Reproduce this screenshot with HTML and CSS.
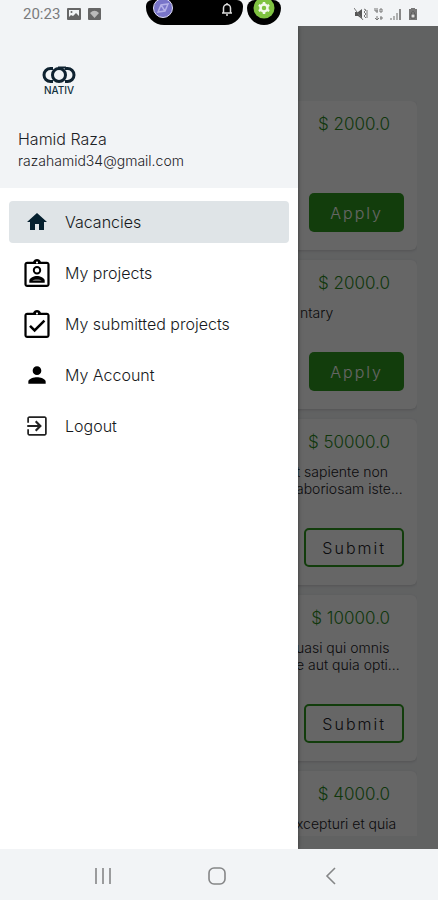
FILE: index.html
```html
<!DOCTYPE html>
<html lang="en">
<head>
<meta charset="utf-8">
<meta name="viewport" content="width=device-width, initial-scale=1">
<title>Nativ</title>
<link rel="stylesheet" href="styles.css">
</head>
<body>
<header class="status">
  <div class="status-left">
    <span class="clock">20:23</span>
    <svg width="14" height="14" viewBox="0 0 14 14"><rect y="1" width="14" height="12" rx="1" fill="#666"/><path d="M2 3h10v6L9 6 6 9 4 8 2 10z" fill="#f2f4f6"/><circle cx="4.500" cy="5" r="1" fill="#666"/></svg>
    <svg width="14" height="14" viewBox="0 0 14 14"><rect y="1" width="13" height="12" rx="1" fill="#666"/><path d="M2 6q4.500-4.500 9 0l-4.500 5z" fill="#bbb"/></svg>
  </div>
  <div class="cutouts">
    <div class="pill">
      <svg width="22" height="22" viewBox="0 0 22 22"><circle cx="11" cy="8" r="9.500" fill="#7975c9" stroke="#dedcf3"/><path d="M6 12l3-7 7-1-3 7zM9 5l4 6" fill="none" stroke="#b5b1e8" stroke-width="1.500"/></svg>
      <svg width="12" height="14" viewBox="0 0 12 14"><path d="M1 11h10M2.500 11V6a3.500 3.500 0 0 1 7 0v5M5 13h2M6 1v1" fill="none" stroke="#ddd" stroke-width="1.500"/></svg>
    </div>
    <div class="lens">
      <svg width="22" height="22" viewBox="0 0 22 22"><circle cx="11" cy="8" r="10.500" fill="#7fc241"/><circle cx="11" cy="8" r="3.500" fill="none" stroke="#f3f8ec" stroke-width="2.500"/><path d="M11 2v3M11 11v3M5.800 5l2.600 1.500M13.600 9.500l2.600 1.500M5.800 11l2.600-1.500M13.600 6.500L16.200 5" stroke="#f3f8ec" stroke-width="2.500"/></svg>
    </div>
  </div>
  <div class="status-right">
    <svg width="14" height="14" viewBox="0 0 14 14"><path d="M1 5h3l4-3v10L4 9H1z" fill="#555"/><path d="M0 1l9 12M10 2l2 1-2 2 2 2-2 2 2 2M13 3v8" fill="none" stroke="#777"/></svg>
    <svg width="10" height="14" viewBox="0 0 10 14"><path d="M1 1v3h3M3 1v5M6 2h2v3H6zM3 9v4M1 11l2 2 2-2M7 13V9M6 11h3" fill="none" stroke="#777"/></svg>
    <svg width="12" height="14" viewBox="0 0 12 14"><path d="M1 13v-2M4 13V9M7 13V6" stroke="#999" stroke-width="1.500"/><path d="M10 13V2" stroke="#888" stroke-width="2"/></svg>
    <svg width="10" height="14" viewBox="0 0 10 14"><path d="M3 1h4v1h2v11H1V2h2z" fill="#777"/><path d="M3 7h4v4H3zM4 7V5h2v2" fill="#ddd" stroke="#555"/></svg>
  </div>
</header>

<main class="screen">
  <section class="vacancies">
    <article class="card">
      <p class="price">$ 2000.0</p>
      <p class="summary">&nbsp;</p>
      <button class="btn solid" type="button">Apply</button>
    </article>
    <article class="card">
      <p class="price">$ 2000.0</p>
      <p class="summary">&nbsp;ntary</p>
      <button class="btn solid" type="button">Apply</button>
    </article>
    <article class="card">
      <p class="price">$ 50000.0</p>
      <p class="summary">t sapiente non<br>aboriosam iste...</p>
      <button class="btn outline" type="button">Submit</button>
    </article>
    <article class="card">
      <p class="price">$ 10000.0</p>
      <p class="summary">uasi qui omnis<br>e aut quia opti...</p>
      <button class="btn outline" type="button">Submit</button>
    </article>
    <article class="card">
      <p class="price">$ 4000.0</p>
      <p class="summary">xcepturi et quia</p>
    </article>
  </section>

  <div class="scrim"></div>

  <aside class="drawer">
    <div class="profile">
      <div class="logo">
        <svg width="36" height="18" viewBox="0 0 36 18" fill="none" stroke="#0f2230" stroke-width="3"><circle cx="18" cy="9" r="6.500"/><path d="M12 2.500H9.500a6.500 6.500 0 0 0 0 13H12M24 2.500h2.500a6.500 6.500 0 0 1 0 13H24"/><path d="M17 1.500h8" stroke-width="2"/></svg>
        <span class="brand">NATIV</span>
      </div>
      <p class="name">Hamid Raza</p>
      <p class="email">razahamid34@gmail.com</p>
    </div>
    <nav class="menu">
      <a class="item active" href="#vacancies"><span class="icon"><svg width="24" height="24" viewBox="0 0 24 24" fill="#05202f"><path d="M10 20v-6h4v6h5v-8h3L12 3 2 12h3v8z"/></svg></span>Vacancies</a>
      <a class="item" href="#projects"><span class="icon"><svg width="26" height="28" viewBox="3 1 18 20"><path d="M19 3h-4.180C14.400 1.840 13.300 1 12 1s-2.400.84-2.820 2H5c-1.100 0-2 .9-2 2v14c0 1.100.9 2 2 2h14c1.100 0 2-.9 2-2V5c0-1.100-.9-2-2-2zm-7-.25c.41 0 .75.34.75.75s-.34.75-.75.75-.75-.34-.75-.75.34-.75.75-.75zM19.400 19.400H4.600V4.600h14.800z"/><circle cx="12" cy="9" r="2.300" fill="none" stroke="#000" stroke-width="1.400"/><path d="M6.500 18v-1.500c0-2 3.500-3.300 5.500-3.300s5.500 1.300 5.500 3.300V18z"/><path d="M8.700 16.500c1-1.200 5.600-1.200 6.600 0z" fill="#888"/></svg></span>My projects</a>
      <a class="item" href="#submitted"><span class="icon"><svg width="26" height="28" viewBox="3 1 18 20"><path d="M19 3h-4.180C14.400 1.840 13.300 1 12 1s-2.400.84-2.820 2H5c-1.100 0-2 .9-2 2v14c0 1.100.9 2 2 2h14c1.100 0 2-.9 2-2V5c0-1.100-.9-2-2-2zm-7-.25c.41 0 .75.34.75.75s-.34.75-.75.75-.75-.34-.75-.75.34-.75.75-.75zM19.400 19.400H4.600V4.600h14.800z"/><path d="M7 12.300l3.300 3.300L17.300 8.600" fill="none" stroke="#000" stroke-width="1.800"/></svg></span>My submitted projects</a>
      <a class="item" href="#account"><span class="icon"><svg width="26" height="26" viewBox="0 0 24 24"><path d="M12 12c2.210 0 4-1.790 4-4s-1.790-4-4-4-4 1.790-4 4 1.790 4 4 4zm0 2c-2.670 0-8 1.340-8 4v2h16v-2c0-2.660-5.330-4-8-4z"/></svg></span>My Account</a>
      <a class="item" href="#logout"><span class="icon"><svg width="26" height="26" viewBox="0 0 24 24" fill="#222"><path d="M10.090 15.590L11.500 17l5-5-5-5-1.410 1.410L12.670 11H3v2h9.670l-2.580 2.590zM19 3H5c-1.110 0-2 .9-2 2v4h1.600V4.600h14.800v14.800H4.600V15H3v4c0 1.100.89 2 2 2h14c1.100 0 2-.9 2-2V5c0-1.100-.9-2-2-2z"/></svg></span>Logout</a>
    </nav>
  </aside>
</main>

<footer class="keys">
  <button class="key" type="button" aria-label="Recents"><svg width="18" height="18" viewBox="0 0 18 18"><path d="M2 1v16M9 1v16M16 1v16" stroke="#858687" stroke-width="1.600"/></svg></button>
  <button class="key" type="button" aria-label="Home"><svg width="18" height="18" viewBox="0 0 18 18"><rect x="1" y="1" width="16" height="16" rx="5" fill="none" stroke="#858687" stroke-width="1.600"/></svg></button>
  <button class="key" type="button" aria-label="Back"><svg width="18" height="18" viewBox="0 0 18 18"><path d="M13 1L5 9l8 8" fill="none" stroke="#858687" stroke-width="1.600"/></svg></button>
</footer>
</body>
</html>
```
FILE: styles.css
```css
* {
  box-sizing: border-box;
}

body {
  margin: 0;
  height: 100vh;
  display: flex;
  flex-direction: column;
  background: #f2f4f6;
  font-family: Inter, "Liberation Sans", sans-serif;
  font-weight: 300;
  color: #1d2226;
}

p {
  margin: 0;
}

svg {
  display: block;
  flex: none;
}

button {
  font: inherit;
  cursor: pointer;
}

/* System status bar */
.status {
  flex: none;
  height: 26px;
  display: grid;
  grid-template-columns: 1fr auto 1fr;
  padding: 0 20px 0 8px;
}

.status-left,
.status-right {
  display: flex;
  align-items: center;
  padding-top: 2px;
}

.status-left {
  gap: 7px;
  padding-left: 15px;
}

.status-right {
  gap: 6px;
  justify-content: flex-end;
}

.clock {
  font: 400 15px/24px Roboto, sans-serif;
  color: #7a7b7c;
}

.cutouts {
  display: flex;
  gap: 4px;
  height: 25px;
}

.pill,
.lens {
  display: flex;
  background: #000;
}

.pill {
  width: 97px;
  justify-content: space-between;
  padding: 0 10px 0 6px;
  border-radius: 6px 6px 18px 18px;
}

.pill svg:last-child {
  margin-top: 2px;
}

.lens {
  width: 34px;
  justify-content: center;
  border-radius: 8px 8px 17px 17px;
}

/* Vacancy list behind the drawer */
.screen {
  flex: 1;
  min-height: 0;
  position: relative;
  overflow: hidden;
  padding: 75px 21px 13px;
}

.vacancies {
  height: 100%;
  overflow: hidden;
  display: flex;
  flex-direction: column;
  gap: 10px;
}

.card {
  flex: none;
  display: flex;
  flex-direction: column;
  align-items: flex-end;
  padding: 11px 13px 18px;
  border-radius: 6px;
  background: #fff;
  box-shadow: 0 1px 3px rgba(0, 0, 0, 0.15);
}

.price {
  padding-right: 14px;
  font-size: 17px;
  line-height: 24px;
  color: #2b8a1c;
}

.summary {
  width: 108px;
  margin-top: 9px;
  font-size: 14px;
  line-height: 17px;
  white-space: nowrap;
}

.btn {
  height: 39px;
  margin-top: 31px;
  padding: 0 21px;
  border-radius: 5px;
  font-size: 16px;
  letter-spacing: 2px;
}

.solid {
  border: 0;
  background: #2f9a1e;
  color: #fff;
}

.outline {
  padding: 0 16px;
  border: 2px solid #2f9a1e;
  background: #fff;
  color: #1d2226;
}

.scrim {
  position: absolute;
  inset: 0;
  background: rgba(0, 0, 0, 0.6);
}

/* Navigation drawer */
.drawer {
  position: absolute;
  inset: 0 auto 0 0;
  width: 68%;
  background: #fff;
  box-shadow: 0 0 4px rgba(0, 0, 0, 0.5);
}

.profile {
  padding: 40px 18px 17px;
  background: #f2f4f6;
}

.logo {
  display: inline-flex;
  flex-direction: column;
  align-items: center;
  margin-left: 23px;
}

.brand {
  font-size: 10px;
  font-weight: 500;
  line-height: 12px;
  color: #12303d;
}

.name {
  margin-top: 31px;
  font-size: 16px;
  line-height: 24px;
}

.email {
  font-size: 14px;
  line-height: 20px;
}

.menu {
  display: flex;
  flex-direction: column;
  gap: 9px;
  padding: 13px 9px;
}

.item {
  display: flex;
  align-items: center;
  gap: 14px;
  height: 42px;
  padding: 0 14px;
  border-radius: 4px;
  font-size: 16px;
  color: #16191c;
  text-decoration: none;
}

.active {
  background: #dfe4e7;
}

.icon {
  width: 28px;
  display: flex;
  justify-content: center;
}

/* System navigation keys */
.keys {
  flex: none;
  height: 51px;
  display: grid;
  grid-template-columns: repeat(3, 1fr);
  padding: 2px 50px 0 46px;
}

.key {
  display: flex;
  align-items: center;
  justify-content: center;
  padding: 0;
  border: 0;
  background: none;
}
```
